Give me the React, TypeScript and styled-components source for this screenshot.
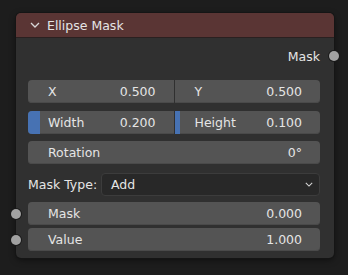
import React from "react";
import styled, { createGlobalStyle } from "styled-components";

const GlobalStyle = createGlobalStyle`
  html, body {
    margin: 0;
    padding: 0;
    background: #1d1d1d;
    width: 348px;
    height: 275px;
    overflow: hidden;
  }
  body {
    font-family: "DejaVu Sans", "Liberation Sans", sans-serif;
    font-size: 12.5px;
    color: #e5e5e5;
  }
`;

const Canvas = styled.div`
  padding: 13px 14px 0 16px;
`;

const Node = styled.div`
  position: relative;
  width: 318px;
  background: #303030;
  border-radius: 5px;
  box-shadow: 0 0 0 1px #151515, 0 2px 6px rgba(0, 0, 0, 0.5);
`;

const Header = styled.div`
  height: 25px;
  display: flex;
  align-items: center;
  gap: 7px;
  padding-left: 14px;
  background: #5a3534;
  border-radius: 5px 5px 0 0;
  border-bottom: 1px solid #2a2020;
  box-sizing: border-box;
`;

const Body = styled.div`
  display: flex;
  flex-direction: column;
  padding: 8px 14px 7px 12px;
`;

const OutputRow = styled.div`
  position: relative;
  height: 20px;
  display: flex;
  align-items: center;
  justify-content: flex-end;
  padding-right: 0;
  margin-bottom: 14px;
`;

const Socket = styled.span<{ $side: "left" | "right" }>`
  position: absolute;
  top: 50%;
  ${({ $side }) => ($side === "left" ? "left: -17px;" : "right: -19px;")}
  width: 10px;
  height: 10px;
  margin-top: -5px;
  border-radius: 50%;
  background: #a1a1a1;
  box-shadow: 0 0 0 1px #1a1a1a;
`;

const Row = styled.div<{ $gap: number }>`
  position: relative;
  margin-top: ${({ $gap }) => $gap}px;
  height: 23px;
  display: flex;
`;

const Field = styled.div<{ $pos?: "left" | "right" | "full" }>`
  position: relative;
  flex: 1;
  display: flex;
  align-items: center;
  justify-content: space-between;
  padding: 0 18px 0 20px;
  background: #545454;
  overflow: hidden;
  border-radius: ${({ $pos }) =>
    $pos === "left" ? "4px 0 0 4px" : $pos === "right" ? "0 4px 4px 0" : "4px"};
  margin-left: ${({ $pos }) => ($pos === "right" ? "1px" : "0")};
  box-shadow: inset 0 -1px 0 #4a4a4a;
`;

const Fill = styled.span`
  position: absolute;
  left: 0;
  top: 0;
  bottom: 0;
  background: #4772b3;
`;

const Label = styled.span`
  position: relative;
`;

const Value = styled.span`
  position: relative;
`;

const SelectRow = styled.div`
  margin-top: 9px;
  height: 23px;
  display: flex;
  align-items: center;
`;

const SelectLabel = styled.span`
  width: 73px;
`;

const Select = styled.div`
  flex: 1;
  height: 23px;
  box-sizing: border-box;
  display: flex;
  align-items: center;
  justify-content: space-between;
  padding: 0 6px 0 9px;
  background: #282828;
  border: 1px solid #3c3c3c;
  border-radius: 4px;
`;

const Chevron = ({ size = 9 }: { size?: number }) => (
  <svg width={size} height={size * 0.6} viewBox="0 0 10 6">
    <path d="M1 1 L5 5 L9 1" fill="none" stroke="#d8d8d8" strokeWidth="1.3" />
  </svg>
);

export default function App() {
  return (
    <>
      <GlobalStyle />
      <Canvas>
        <Node>
          <Header>
            <Chevron size={10} />
            <span>Ellipse Mask</span>
          </Header>
          <Body>
            <OutputRow>
              <span>Mask</span>
              <Socket $side="right" />
            </OutputRow>
            <Row $gap={0}>
              <Field $pos="left">
                <Label>X</Label>
                <Value>0.500</Value>
              </Field>
              <Field $pos="right">
                <Label>Y</Label>
                <Value>0.500</Value>
              </Field>
            </Row>
            <Row $gap={8}>
              <Field $pos="left">
                <Fill style={{ width: 12 }} />
                <Label>Width</Label>
                <Value>0.200</Value>
              </Field>
              <Field $pos="right">
                <Fill style={{ width: 5 }} />
                <Label>Height</Label>
                <Value>0.100</Value>
              </Field>
            </Row>
            <Row $gap={7}>
              <Field $pos="full">
                <Label>Rotation</Label>
                <Value>0°</Value>
              </Field>
            </Row>
            <SelectRow>
              <SelectLabel>Mask Type:</SelectLabel>
              <Select>
                <span>Add</span>
                <Chevron size={8} />
              </Select>
            </SelectRow>
            <Row $gap={6}>
              <Socket $side="left" />
              <Field $pos="full">
                <Label>Mask</Label>
                <Value>0.000</Value>
              </Field>
            </Row>
            <Row $gap={3}>
              <Socket $side="left" />
              <Field $pos="full">
                <Label>Value</Label>
                <Value>1.000</Value>
              </Field>
            </Row>
          </Body>
        </Node>
      </Canvas>
    </>
  );
}
